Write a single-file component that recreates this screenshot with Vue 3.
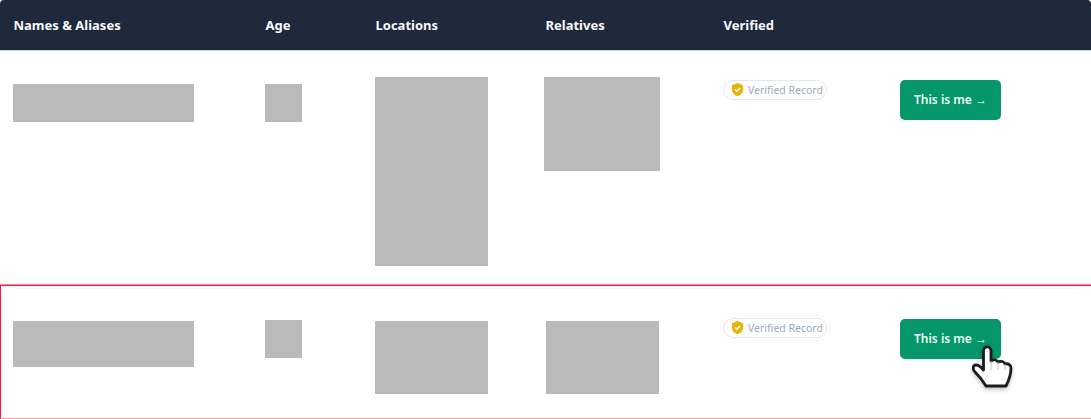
<script setup>
const columns = ['Names & Aliases', 'Age', 'Locations', 'Relatives', 'Verified', '']
</script>

<template>
  <div class="page">
    <div class="grid head">
      <div v-for="c in columns" :key="c" class="th">{{ c }}</div>
    </div>

    <div class="grid row first">
      <div class="ph name-a"></div>
      <div class="ph age-a"></div>
      <div class="ph loc-a"></div>
      <div class="ph rel-a"></div>
      <div class="badge b-a">
        <svg class="shield" viewBox="0 0 24 24" width="15" height="15">
          <path d="M12 1.500 21 5v7c0 5.500-3.800 9-9 10.500C6.800 21 3 17.500 3 12V5z" fill="#eab308" />
          <path d="M8 12l3 3 5-5.500" fill="none" stroke="#fff" stroke-width="2.400" />
        </svg>
        <span>Verified Record</span>
      </div>
      <button class="btn b-a" type="button">This is me →</button>
    </div>

    <div class="grid row second">
      <div class="ph name-b"></div>
      <div class="ph age-b"></div>
      <div class="ph loc-b"></div>
      <div class="ph rel-b"></div>
      <div class="badge b-b">
        <svg class="shield" viewBox="0 0 24 24" width="15" height="15">
          <path d="M12 1.500 21 5v7c0 5.500-3.800 9-9 10.500C6.800 21 3 17.500 3 12V5z" fill="#eab308" />
          <path d="M8 12l3 3 5-5.500" fill="none" stroke="#fff" stroke-width="2.400" />
        </svg>
        <span>Verified Record</span>
      </div>
      <button class="btn" type="button">This is me →</button>
    </div>

    <svg class="cursor" viewBox="970 343 46 48" width="46" height="48">
      <path
        d="M983.500 351C983.500 345.500 991 345.500 991 351V361C994 359 997 360 998 362C1001 360.500 1004 361.500 1005 364C1008 363 1011 365 1011 368C1011 374 1009 380 1006 386H986C983 381 979 376 975 372C972 369 973 365 976 365C979 365 981 367 983.500 370Z"
        fill="#fff"
        stroke="#1c1c1c"
        stroke-width="2.800"
        stroke-linejoin="round"
      />
      <path d="M991 361V370M998 362V370M1005 364V370" fill="none" stroke="#c4c4c4" stroke-width="1" />
    </svg>
  </div>
</template>

<style>
html,
body {
  margin: 0;
  background: #fff;
}
</style>

<style scoped>
.page {
  position: relative;
  width: 1091px;
  height: 419px;
  overflow: hidden;
  background: #fff;
  font-family: "Noto Sans", "Open Sans", sans-serif;
}
.grid {
  display: grid;
  grid-template-columns: 252px 110px 170px 178px 177px 1fr;
  padding-left: 13px;
  box-sizing: border-box;
  align-items: start;
}
.head {
  height: 51px;
  align-items: center;
  background: #1e293b;
  border-radius: 4px 4px 0 0;
  border-bottom: 1px solid #cbd5e1;
}
.th {
  color: #f8fafc;
  font-size: 13px;
  font-weight: 700;
  line-height: 18px;
  margin-top: 0;
  padding-left: 0.500px;
}
.row.first {
  height: 234px;
  padding-top: 26px;
}
.row.second {
  position: relative;
  height: 134px;
  padding-top: 33px;
  padding-left: 12px;
  border-top: 1px solid #ef1a3c;
  border-left: 1px solid #ef1a3c;
  border-bottom: 1px solid #fb9aa8;
  box-shadow: 0 -0.500px 0 #ef1a3c;
}
.row.second::before {
  content: "";
  position: absolute;
  left: 13px;
  right: 13px;
  top: 2px;
  height: 1px;
  background: #f4f7fa;
}
.ph {
  background: #bababa;
}
.name-a {
  width: 181px;
  height: 38px;
  margin-top: 7px;
}
.age-a {
  width: 37px;
  height: 38px;
  margin-top: 7px;
}
.loc-a {
  width: 113px;
  height: 189px;
}
.rel-a {
  width: 116px;
  height: 94px;
  margin-left: -1px;
}
.name-b {
  width: 181px;
  height: 46px;
  margin-top: 2px;
}
.age-b {
  width: 37px;
  height: 38px;
  margin-top: 1px;
}
.loc-b {
  width: 113px;
  height: 73px;
  margin-top: 2px;
}
.rel-b {
  width: 113px;
  height: 73px;
  margin-top: 2px;
  margin-left: 1px;
}
.badge {
  box-sizing: border-box;
  width: 104px;
  height: 20px;
  display: flex;
  align-items: center;
  gap: 3px;
  padding: 0 0 1px 6px;
  border: 1px solid #e5e7eb;
  border-radius: 10px;
  color: #9ca9ba;
  font-size: 10.500px;
  white-space: nowrap;
}
.badge.b-a {
  margin-top: 3px;
}
.badge.b-b {
  margin-top: -1px;
}
.shield {
  flex: none;
}
.btn {
  width: 101px;
  height: 40px;
  padding: 0 0 2px;
  border: 0;
  border-radius: 5px;
  background: #059669;
  color: #ecfdf5;
  font-family: inherit;
  font-size: 12px;
  font-weight: 600;
}
.btn.b-a {
  margin-top: 3px;
}
.cursor {
  position: absolute;
  left: 970px;
  top: 343px;
  filter: drop-shadow(0 2px 2px rgba(0, 0, 0, 0.25));
}
</style>
